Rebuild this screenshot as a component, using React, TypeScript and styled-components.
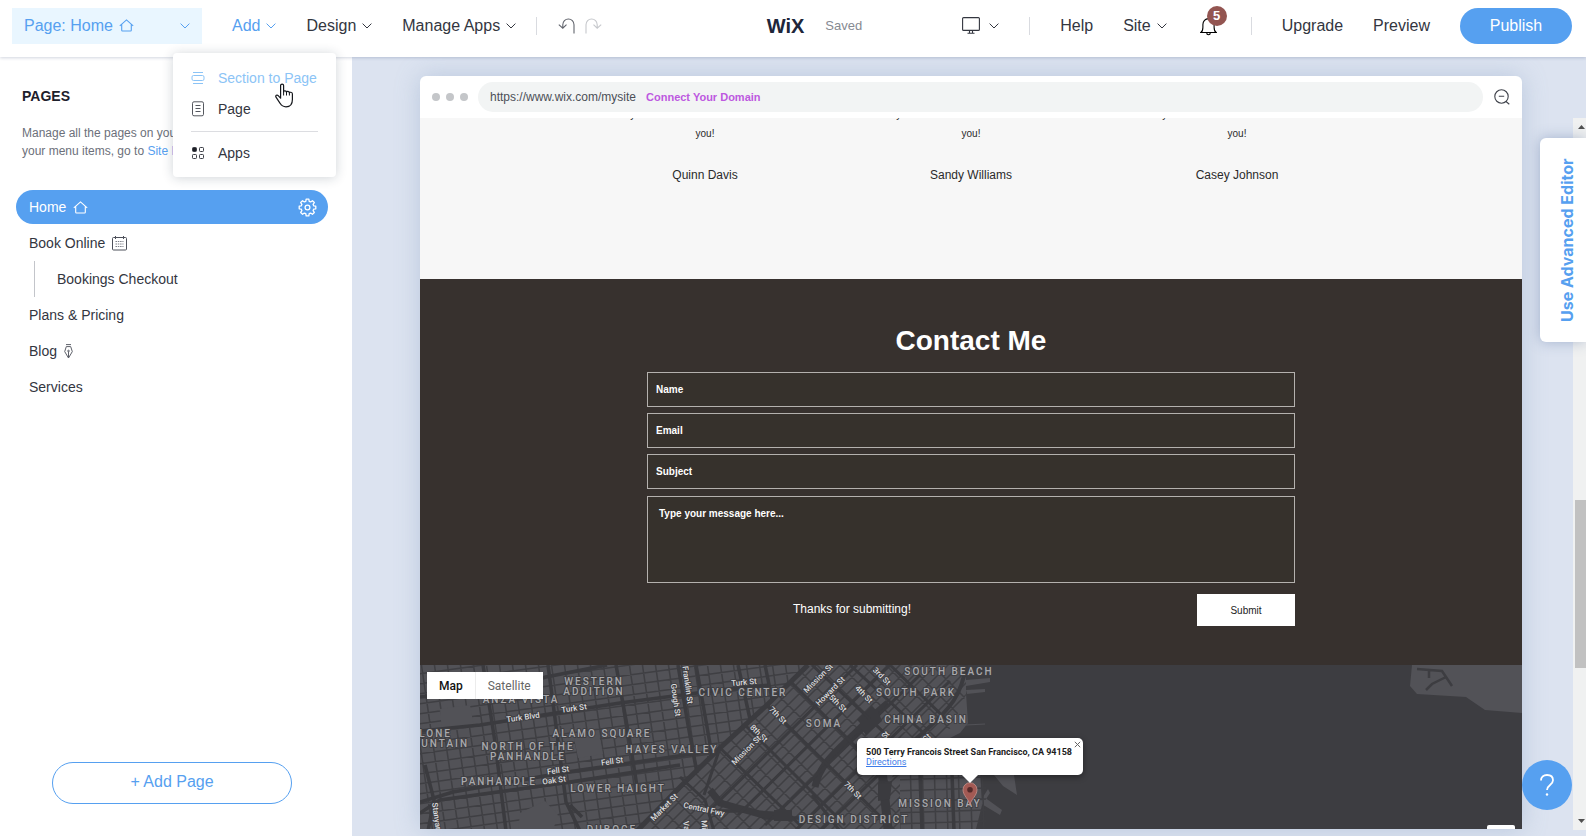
import React from 'react';
import styled, { createGlobalStyle, css } from 'styled-components';

const SANS = '"Liberation Sans", Arial, Helvetica, sans-serif';
const MAP_FONT = 'Roboto, Arial, sans-serif';
const BLUE = '#56a0f0';
const INK = '#33363f';

const GlobalStyle = createGlobalStyle`
  *, *::before, *::after { box-sizing: border-box; }
  html, body { margin: 0; }
  body { font-family: ${SANS}; color: ${INK}; background: #fff; }
  button, input, textarea { font-family: inherit; }
  button { cursor: pointer; }
  h1, h2, p, ul { margin: 0; padding: 0; }
  ul { list-style: none; }
`;

/* ---------- shell ---------- */

const Shell = styled.div`
  display: flex;
  flex-direction: column;
  min-height: 100vh;
`;

const TopBar = styled.header`
  position: relative;
  z-index: 5;
  display: flex;
  align-items: center;
  height: 57px;
  padding: 0 14px 6px 12px;
  background: #fff;
  box-shadow: 0 1px 3px rgba(50, 70, 110, 0.22);
`;

const Cluster = styled.div`
  display: flex;
  align-items: center;
`;

const MainMenu = styled(Cluster).attrs({ as: 'nav' })`
  gap: 30px;
  margin-left: 30px;
`;

const PlainButton = styled.button<{ $color?: string }>`
  display: inline-flex;
  align-items: center;
  gap: 6px;
  padding: 0;
  border: 0;
  background: none;
  color: ${(p) => p.$color || INK};
  font-size: 16px;
  line-height: 20px;
  white-space: nowrap;
`;

const PageSelect = styled(PlainButton)`
  width: 190px;
  height: 36px;
  padding: 0 12px;
  background: #e9f6ff;

  & > svg:last-child { margin-left: auto; }
`;

const Divider = styled.span`
  width: 1px;
  height: 18px;
  background: #d9dbe0;
`;

const History = styled(Cluster)`
  gap: 10px;
  margin-left: 20px;

  ${Divider} { margin-right: 11px; }
`;

const Brand = styled(Cluster)`
  gap: 21px;
  margin-left: auto;
`;

const Logo = styled.span`
  color: #20263a;
  font-size: 20px;
  font-weight: 700;
  line-height: 20px;
`;

const Saved = styled.span`
  color: #868a92;
  font-size: 13px;
  line-height: 20px;
`;

const Tools = styled(Cluster)`
  gap: 30px;
  margin-left: 100px;
`;

const DeviceButton = styled(PlainButton)`
  gap: 9px;
`;

const BellButton = styled.button`
  position: relative;
  width: 18px;
  height: 20px;
  margin: 0 3px;
  padding: 0;
  border: 0;
  background: none;
`;

const Badge = styled.span`
  position: absolute;
  left: 7px;
  top: -10px;
  width: 20px;
  height: 20px;
  border-radius: 50%;
  background: #935551;
  color: #fff;
  font-size: 13px;
  font-weight: 700;
  line-height: 20px;
  text-align: center;
`;

const Publish = styled.button`
  width: 112px;
  height: 36px;
  padding: 0;
  border: 0;
  border-radius: 18px;
  background: ${BLUE};
  color: #fff;
  font-size: 16px;
`;

/* ---------- Add menu ---------- */

const MenuAnchor = styled.div`
  position: relative;
  display: flex;
`;

const AddMenu = styled.div`
  position: absolute;
  left: -59px;
  top: 37px;
  width: 163px;
  padding: 10px 18px 8px;
  border-radius: 4px;
  background: #fff;
  box-shadow: 0 1px 12px rgba(20, 40, 60, 0.2);
`;

const MenuItem = styled.button<{ $active?: boolean }>`
  display: flex;
  align-items: center;
  gap: 13px;
  width: 100%;
  height: 31px;
  padding: 0;
  border: 0;
  background: none;
  color: ${(p) => (p.$active ? '#8cc4f6' : INK)};
  font-size: 14px;
  white-space: nowrap;
`;

const MenuRule = styled.hr`
  height: 1px;
  margin: 6px 0;
  border: 0;
  background: #dcdde1;
`;

const Pointer = styled.svg`
  position: absolute;
  left: 102px;
  top: 30px;
`;

/* ---------- pages panel ---------- */

const Body = styled.div`
  display: flex;
  flex: 1;
`;

const Panel = styled.aside`
  display: flex;
  flex-direction: column;
  flex: none;
  width: 352px;
  padding: 30px 24px 32px 16px;
  background: #fff;
`;

const PanelTitle = styled.h2`
  padding-left: 6px;
  font-size: 14px;
  line-height: 18px;
  color: #1d202b;
`;

const PanelText = styled.p`
  margin: 19px 0 30px;
  padding-left: 6px;
  color: #6c707a;
  font-size: 12px;
  line-height: 18px;

  a { color: ${BLUE}; text-decoration: none; }
`;

const PageList = styled.ul`
  display: flex;
  flex-direction: column;
  gap: 2px;
`;

const PageItem = styled.li<{ $active?: boolean; $child?: boolean }>`
  display: flex;
  align-items: center;
  justify-content: space-between;
  height: 34px;
  padding: 0 11px 0 13px;
  border-radius: 17px;
  ${(p) => p.$active && css`background: ${BLUE}; color: #fff;`}
  ${(p) => p.$child && css`
    height: 36px;
    margin: -1px 0 -1px 18px;
    padding-left: 22px;
    border-left: 1px solid #c3c5ca;
    border-radius: 0;
  `}
`;

const PageLink = styled.a`
  display: inline-flex;
  align-items: center;
  gap: 7px;
  color: inherit;
  font-size: 14px;
  text-decoration: none;
`;

const IconButton = styled.button`
  display: flex;
  padding: 0;
  border: 0;
  background: none;
  color: inherit;
`;

const AddPage = styled.button`
  align-self: center;
  width: 240px;
  height: 42px;
  margin-top: auto;
  padding: 0 0 2px;
  border: 1px solid ${BLUE};
  border-radius: 21px;
  background: #fff;
  color: ${BLUE};
  font-size: 16px;
`;

/* ---------- stage ---------- */

const Stage = styled.main`
  position: relative;
  display: flex;
  flex: 1;
  min-width: 0;
  background: #dce3f0;
`;

const Frame = styled.section`
  display: flex;
  flex-direction: column;
  flex: 1;
  min-width: 0;
  margin: 19px 51px 7px 68px;
  border-radius: 6px 6px 0 0;
  background: #fff;
  box-shadow: 0 0 24px rgba(120, 150, 185, 0.35);
`;

const AddressRow = styled.div`
  display: flex;
  align-items: center;
  height: 42px;
  padding: 0 12px;
`;

const Dots = styled.div`
  display: flex;
  gap: 6px;
  margin-right: 10px;

  i {
    width: 8px;
    height: 8px;
    border-radius: 50%;
    background: #c4c6c9;
  }
`;

const Address = styled.div`
  display: flex;
  align-items: center;
  flex: 1;
  gap: 10px;
  height: 30px;
  margin-right: 11px;
  padding: 0 12px;
  border-radius: 15px;
  background: #f2f4f4;
  color: #4c4f57;
  font-size: 12px;

  a {
    color: #bd59e0;
    font-size: 11px;
    font-weight: 700;
    text-decoration: none;
  }
`;

const Testimonials = styled.div`
  display: grid;
  grid-template-columns: repeat(3, 266px);
  justify-content: center;
  height: 161px;
  overflow: hidden;
  background: #f7f7f7;
  color: #2a2a2a;
  text-align: center;
`;

const Quote = styled.div`
  margin-top: -13px;
  font-size: 10px;
  line-height: 19px;
`;

const Author = styled.div`
  margin-top: 22px;
  font-size: 12px;
  line-height: 20px;
`;

const Contact = styled.div`
  display: flex;
  flex-direction: column;
  align-items: center;
  height: 386px;
  padding: 46px 24px 0;
  background: #37312e;
  color: #fff;
`;

const ContactTitle = styled.h1`
  margin-bottom: 15px;
  font-size: 28px;
  line-height: 32px;
`;

const Form = styled.form`
  display: flex;
  flex-direction: column;
  gap: 6px;
  width: 100%;
  max-width: 648px;
`;

const fieldLook = css`
  display: block;
  width: 100%;
  border: 1px solid #b4b1ae;
  border-radius: 0;
  outline: 0;
  background: #36312c;
  color: #fff;
  font-size: 10px;
  font-weight: 700;

  &::placeholder { color: #fff; opacity: 1; }
`;

const Field = styled.input`
  ${fieldLook}
  height: 35px;
  padding: 0 8px;
`;

const Message = styled.textarea`
  ${fieldLook}
  height: 87px;
  margin-top: 1px;
  padding: 10px 11px;
  line-height: 14px;
  resize: none;
`;

const FormFoot = styled.div`
  display: flex;
  align-items: center;
  justify-content: space-between;
  margin-top: 5px;
`;

const Thanks = styled.p`
  flex: 1;
  max-width: 410px;
  padding-bottom: 2px;
  font-size: 12px;
  text-align: center;
`;

const Submit = styled.button`
  width: 98px;
  height: 32px;
  padding: 0;
  border: 0;
  background: #fff;
  color: #222;
  font-size: 10px;
`;

/* ---------- map ---------- */

const MapArea = styled.div`
  position: relative;
  flex: 1;
  min-height: 164px;
  overflow: hidden;
  background: #3d3d41;
  font-family: ${MAP_FONT};
`;

const Streets = styled.svg`
  position: absolute;
  inset: 0;
  width: 100%;
  height: 100%;
`;

const MapLabels = styled.g`
  font-family: ${MAP_FONT};
  font-weight: 500;
  stroke: #3f3f43;
  stroke-width: 2px;
  stroke-linejoin: round;
  text-anchor: middle;
  paint-order: stroke;
`;

const AreaNames = styled.g`
  fill: #a9a9ac;
  font-size: 10px;
  letter-spacing: 2px;
`;

const RoadNames = styled.g`
  fill: #dcdcde;
  font-size: 8px;
`;

const MapToggle = styled.div`
  position: absolute;
  left: 7px;
  top: 7px;
  display: flex;
  background: #fff;
`;

const MapTab = styled.button<{ $on?: boolean }>`
  height: 27px;
  padding: 0 12px;
  border: 0;
  border-right: ${(p) => (p.$on ? '1px solid #ececec' : '0')};
  background: none;
  color: ${(p) => (p.$on ? '#111' : '#666')};
  font-family: ${MAP_FONT};
  font-size: 12px;
  font-weight: ${(p) => (p.$on ? 500 : 400)};
`;

const InfoBox = styled.div`
  position: absolute;
  left: 437px;
  top: 73px;
  width: 226px;
  height: 37px;
  padding: 9px 9px 0;
  border-radius: 5px;
  background: #fff;
  box-shadow: 0 2px 6px rgba(0, 0, 0, 0.4);
  color: #1c1c1c;
  font-size: 9px;
  font-weight: 700;
  line-height: 10px;
  white-space: nowrap;

  &::after {
    content: '';
    position: absolute;
    left: 105px;
    top: 37px;
    border: 8px solid transparent;
    border-top-color: #fff;
    border-bottom: 0;
  }

  a { color: #3d7be8; font-weight: 400; }
`;

const InfoClose = styled.button`
  position: absolute;
  right: 2px;
  top: 3px;
  display: flex;
  padding: 0;
  border: 0;
  background: none;
`;

const MapPin = styled.svg`
  position: absolute;
  left: 542px;
  top: 117px;
`;

const MapControl = styled.span`
  position: absolute;
  right: 7px;
  bottom: 0;
  width: 28px;
  height: 4px;
  border-radius: 2px 2px 0 0;
  background: #fff;
`;

/* ---------- right edge ---------- */

const ScrollTrack = styled.div`
  display: flex;
  flex-direction: column;
  align-items: center;
  flex: none;
  width: 13px;
  margin: 61px 0 6px;
  padding: 7px 0 7px 3px;
  background: #f0f1f1;
`;

const ScrollSpacer = styled.div<{ $grow: number }>`
  flex: ${(p) => p.$grow} 1 0;
`;

const ScrollThumb = styled.div`
  flex: 167 1 0;
  align-self: flex-end;
  width: 11px;
  background: #c1c1c1;
`;

const AdvancedTab = styled.button`
  position: absolute;
  right: 0;
  top: 81px;
  width: 46px;
  height: 204px;
  padding: 0 7px 0 0;
  border: 0;
  border-radius: 0 6px 6px 0;
  background: #fff;
  box-shadow: 0 0 14px rgba(60, 90, 140, 0.35);
  color: ${BLUE};
  font-family: Inter, ${SANS};
  font-size: 16px;
  font-weight: 700;
  writing-mode: vertical-rl;
  transform: rotate(180deg);
`;

const HelpButton = styled.button`
  position: absolute;
  right: 14px;
  bottom: 26px;
  display: flex;
  align-items: center;
  justify-content: center;
  width: 50px;
  height: 50px;
  padding: 0;
  border: 0;
  border-radius: 50%;
  background: ${BLUE};
`;

/* ---------- icons ---------- */

const Chevron = () => (
  <svg width="10" height="6" viewBox="0 0 10 6" fill="none" stroke="currentColor" aria-hidden="true">
    <path d="M.6.6 5 5 9.4.6" />
  </svg>
);

const HomeIcon = () => (
  <svg width="15" height="13" viewBox="0 0 15 13" fill="none" stroke="currentColor" strokeWidth="1.1" aria-hidden="true">
    <path d="M.8 6.8 7.5.9l6.7 5.9M2.7 5.4v5.8c0 .5.3.8.8.8h8c.5 0 .8-.3.8-.8V5.4" />
  </svg>
);

const UndoIcon = ({ flip }: { flip?: boolean }) => (
  <svg width="17" height="16" viewBox="0 0 17 16" fill="none" stroke={flip ? '#c6c8cc' : '#62656d'} strokeWidth="1.1" aria-hidden="true">
    <g transform={flip ? 'matrix(-1 0 0 1 17 0)' : undefined}>
      <path d="M16 15.500V6.800C16 3.400 13.500 1 10.400 1S4.800 3.400 4.800 6.800v3M.8 6.600l4 3.600 3.700-3.600" />
    </g>
  </svg>
);

const MonitorIcon = () => (
  <svg width="18" height="17" viewBox="0 0 18 17" fill="none" stroke="currentColor" strokeWidth="1.1" aria-hidden="true">
    <rect x=".6" y=".6" width="16.800" height="12.800" rx="1" />
    <path d="M7.500 13.500v2.400M10.500 13.500v2.400M5.500 16.200h7" />
  </svg>
);

const BellIcon = () => (
  <svg width="17" height="20" viewBox="0 0 17 20" fill="none" stroke="currentColor" strokeWidth="1.100" aria-hidden="true">
    <path d="M.8 16.500c1.700-1 2.100-2.700 2.100-5.300V8.500c0-3.300 2.300-5.900 5.600-5.900s5.600 2.600 5.600 5.900v2.700c0 2.600.4 4.300 2.100 5.300zM8.500 2.600V1M6.700 16.800c0 2.600 3.600 2.600 3.600 0" />
  </svg>
);

const SectionIcon = () => (
  <svg width="14" height="14" viewBox="0 0 14 14" fill="none" stroke="currentColor" aria-hidden="true">
    <path d="M2 1.500h10M2 12.500h10" />
    <rect x="1" y="4.500" width="12" height="5" rx="1.500" />
  </svg>
);

const PageIcon = () => (
  <svg width="14" height="16" viewBox="0 0 14 16" fill="none" stroke="#55585f" aria-hidden="true">
    <rect x="1.500" y=".8" width="11" height="14" rx="1.500" />
    <path d="M4.500 4.500h5M4.500 7.500h5M4.500 10.500h5" />
  </svg>
);

const AppsIcon = () => (
  <svg width="14" height="14" viewBox="0 0 14 14" fill="none" stroke="#3a3d45" aria-hidden="true">
    <rect x="1.500" y="1.500" width="4" height="4" rx="1" fill="#1d1f26" />
    <rect x="8.500" y="1.500" width="4" height="4" rx=".8" />
    <rect x="1.500" y="8.500" width="4" height="4" rx=".8" />
    <rect x="8.500" y="8.500" width="4" height="4" rx=".8" />
  </svg>
);

const GearIcon = () => {
  const pts: string[] = [];
  for (let i = 0; i < 8; i += 1) {
    const a = (i * Math.PI) / 4;
    [[-0.27, 6.4], [-0.16, 8.4], [0.16, 8.4], [0.27, 6.4]].forEach(([d, r]) => {
      pts.push(`${(9.5 + r * Math.sin(a + d)).toFixed(2)} ${(9.5 - r * Math.cos(a + d)).toFixed(2)}`);
    });
  }
  return (
    <svg width="19" height="19" viewBox="0 0 19 19" fill="none" stroke="currentColor" strokeWidth="1.300" strokeLinejoin="round" aria-hidden="true">
      <path d={`M${pts.join('L')}Z`} />
      <circle cx="9.500" cy="9.500" r="2.400" />
    </svg>
  );
};

const CalendarIcon = () => (
  <svg width="15" height="15" viewBox="0 0 15 15" fill="none" stroke="#4d505a" aria-hidden="true">
    <rect x=".5" y="1.500" width="14" height="12.500" rx="1" />
    <path d="M3.500 0v3M11.500 0v3" />
    <path d="M3.500 5.500h8M3.500 8h8M3.500 10.500h8" strokeDasharray="1.500 .8" stroke="#7b7e87" />
  </svg>
);

const PenIcon = () => (
  <svg width="9" height="15" viewBox="0 0 9 15" fill="none" stroke="#5d6069" aria-hidden="true">
    <path d="M2 .6h5M2.300 2.600h4.400l1.600 5L4.500 14 .7 7.600zM4.500 14V7.500" />
    <circle cx="4.500" cy="7" r=".8" />
  </svg>
);

const ZoomOutIcon = () => (
  <svg width="16" height="16" viewBox="0 0 16 16" fill="none" stroke="#3f424b" strokeWidth="1.100" aria-hidden="true">
    <circle cx="7.500" cy="7.500" r="6.700" />
    <path d="M4.800 7.300h5.400M12 12.500l3.300 2.700" />
  </svg>
);

const ScrollArrow = ({ down }: { down?: boolean }) => (
  <svg width="7" height="4" viewBox="0 0 7 4" aria-hidden="true">
    <path d={down ? 'M0 0h7L3.500 4z' : 'M0 4h7L3.500 0z'} fill="#505050" />
  </svg>
);

/* ---------- street map drawing ---------- */

type Line = [number, number, number, number];

const minorWest: Line[] = [];
for (let i = -3; i < 32; i += 1) minorWest.push([i * 13, -10, i * 13 + 27, 175]);
for (let i = -1; i < 26; i += 1) minorWest.push([-10, i * 10, 400, i * 10 - 56]);

const minorSoma: Line[] = [];
for (let i = -12; i < 44; i += 1) minorSoma.push([180 + i * 12, 180, 370 + i * 12, -10]);
for (let i = -6; i < 18; i += 1) minorSoma.push([180 + i * 23, -10, 370 + i * 23, 180]);

const minorBay: Line[] = [];
for (let i = 0; i < 10; i += 1) minorBay.push([478 + i * 12, 90, 480 + i * 12, 170]);
for (let i = 0; i < 7; i += 1) minorBay.push([470, 104 + i * 11, 570, 101 + i * 11]);

const toPath = (lines: Line[]) => lines.map(([a, b, c, d]) => `M${a} ${b}L${c} ${d}`).join('');

const areas: [string, number, number, ('start' | 'middle' | 'end')?][] = [
  ['WESTERN', 174, 20], ['ADDITION', 174, 30], ['ANZA VISTA', 101, 38],
  ['LONE', 32, 72, 'end'], ['MOUNTAIN', 49, 82, 'end'], ['ALAMO SQUARE', 182, 72],
  ['NORTH OF THE', 108, 85], ['PANHANDLE', 108, 95], ['HAYES VALLEY', 252, 88],
  ['PANHANDLE', 79, 120], ['LOWER HAIGHT', 198, 127], ['DUBOCE', 192, 168],
  ['CIVIC CENTER', 323, 31], ['SOUTH BEACH', 529, 10], ['SOUTH PARK', 496, 31],
  ['CHINA BASIN', 506, 58], ['SOMA', 404, 62], ['MISSION BAY', 520, 142],
  ['DESIGN DISTRICT', 434, 158],
];

const roads: [string, number, number, number][] = [
  ['Turk Blvd', 103, 52, -8], ['Turk St', 154, 43, -8], ['Fell St', 192, 96, -8],
  ['Fell St', 138, 105, -8], ['Oak St', 134, 115, -8], ['Franklin St', 268, 20, 82],
  ['Gough St', 256, 35, 82], ['Stanyan', 17, 152, 82], ['Market St', 244, 142, -45],
  ['Central Fwy', 284, 144, 12], ['Mission St', 286, 174, 85], ['Valencia St', 268, 176, 85],
  ['Turk St', 324, 17, -5], ['7th St', 358, 50, 45], ['8th St', 339, 68, 45],
  ['Mission St', 326, 85, -45], ['Mission St', 398, 13, -45], ['Howard St', 410, 26, -45],
  ['5th St', 418, 38, 45], ['3rd St', 462, 11, 45], ['4th St', 444, 29, 45],
  ['7th St', 433, 125, 45], ['Brannan St', 454, 81, -45], ['Townsend St', 493, 86, -45],
];

const StreetMap = () => (
  <Streets role="img" aria-label="Street map of San Francisco">
    <defs>
      <clipPath id="west"><path d="M0 0H392L347 40 300 83 217 166H0Z" /></clipPath>
      <clipPath id="soma"><path d="M392 0H546V30L532 62 480 100V166H217L300 83 347 40Z" /></clipPath>
      <clipPath id="bay"><path d="M480 100H566V166H480Z" /></clipPath>
    </defs>
    <path fill="#525257" d="M0 0H540L546 12V28L548 58 540 68 480 98 472 112 500 105H560L562 140 556 164H0Z" />
    <path fill="#525257" d="M546 15 570 13v4l-24 4zM546 25l19-1v3l-18 2zM574 110h20l3 20-14-9zM560 138l4-6 18 13-2 5zM563 132l5-8 2 4-6 9z" />
    <path fill="none" stroke="#525257" d="M546 60 565 59" />
    <path fill="#525257" d="M992 0H3000V200L1102 48 1065 45 1046 32 997 29 990 21Z" />
    <path fill="none" stroke="#3d3d41" strokeWidth="2.500" d="M997 4 1022 6 1032 21M1009 5v8M1026 12 1012 19 1006 25" />

    <g fill="none" stroke="#3f3f43">
      <path clipPath="url(#west)" strokeWidth="1.500" d={toPath(minorWest)} />
      <path clipPath="url(#soma)" strokeWidth="1.500" d={toPath(minorSoma)} />
      <path clipPath="url(#bay)" strokeWidth="1.500" d={toPath(minorBay)} />
    </g>
    <path fill="#525257" d="M100 148 125 136 138 150 132 168H98ZM154 73 179 69 183 89 158 93ZM20 44 50 40 54 62 22 66Z" />
    <g fill="none" stroke="#3b3b3f">
      <g strokeWidth="3.500">
        <path d="M0 66 60 60 110 52 200 38 300 25 350 20" />
        <path d="M0 32 90 22 126 12 187 0" />
        <path d="M0 137 33 127 147 107 300 85" />
        <path d="M0 148 20 135 150 117 260 100" />
        <path d="M63 0 75 77 86 166M128 0 146 137 160 166M196 0 210 77 218 128M258 0 268 60 277 108M5 100 14 135 8 166M150 140 162 152" />
        <path d="M276 0 292 90M318 0 330 54M345 0 352 34" />
        <path d="M284 146H330L345 153H400" />
        <path d="M500 108 502 166M532 108 534 166" />
      </g>
      <path strokeWidth="5" d="M215 168 262 120 300 83 347 40 388 0" />
      <path strokeWidth="7" d="M290 125 300 138 340 149 370 151M395 122C400 95 425 80 448 55L468 38" />
      <path strokeWidth="9" d="M440 58 455 44M462 105 468 164" />
      <g strokeWidth="3">
        <path d="M290 145 437 0M318 150 470 0M345 160 500 10M375 166 530 16M400 166 500 70" />
        <path d="M300 83 380 160M325 60 425 160M347 40 475 166M372 18 460 106M392 0 490 92M430 0 510 74M470 0 530 58" />
        <path d="M392 130 420 166M260 112 285 135 294 166M300 83 284 130" />
      </g>
      <path strokeWidth="4" d="M546 0C542 30 530 44 505 66L470 96" />
    </g>
    <path fill="#3b3b3f" d="M440 62 458 46 462 56 446 70ZM458 118 472 116 470 134 458 136ZM354 145H372V156H354Z" />

    <MapLabels>
      <AreaNames>
        {areas.map(([t, x, y, anchor]) => (
          <text key={`${t}${y}`} x={x} y={y} textAnchor={anchor}>{t}</text>
        ))}
      </AreaNames>
      <RoadNames>
        {roads.map(([t, x, y, r]) => (
          <text key={`${t}${x}`} transform={`translate(${x} ${y}) rotate(${r})`} y="3">{t}</text>
        ))}
      </RoadNames>
    </MapLabels>
  </Streets>
);

/* ---------- data ---------- */

const authors = ['Quinn Davis', 'Sandy Williams', 'Casey Johnson'];

const pages: { name: string; icon?: React.ReactNode; active?: boolean; child?: boolean }[] = [
  { name: 'Home', icon: <HomeIcon />, active: true },
  { name: 'Book Online', icon: <CalendarIcon /> },
  { name: 'Bookings Checkout', child: true },
  { name: 'Plans & Pricing' },
  { name: 'Blog', icon: <PenIcon /> },
  { name: 'Services' },
];

export default function App() {
  return (
    <Shell>
      <GlobalStyle />
      <TopBar>
        <PageSelect $color={BLUE}>Page: Home <HomeIcon /><Chevron /></PageSelect>
        <MainMenu>
          <MenuAnchor>
            <PlainButton $color={BLUE} aria-expanded="true">Add <Chevron /></PlainButton>
            <AddMenu>
              <MenuItem $active><SectionIcon />Section to Page</MenuItem>
              <MenuItem><PageIcon />Page</MenuItem>
              <MenuRule />
              <MenuItem><AppsIcon />Apps</MenuItem>
              <Pointer width="19" height="25" viewBox="0 0 19 25" aria-hidden="true">
                <path
                  fill="#fff"
                  stroke="#15171c"
                  strokeWidth="1.200"
                  strokeLinejoin="round"
                  d="M5.600 15.200V2.600C5.600.5 8.600.5 8.600 2.600V9c0-1.600 2.900-1.600 2.900.4 0-1.500 2.900-1.400 2.900.7 0-1.300 3-1.200 3 .9v5.500c0 4.600-2.600 7.300-6.400 7.300-3 0-4.600-1.300-5.900-3.500L1 14.200c-.9-1.600 1-2.800 2.200-1.500z"
                />
                <path stroke="#15171c" d="M8.600 9v3.500M11.500 9.400v3.100M14.400 10.100v2.400" />
              </Pointer>
            </AddMenu>
          </MenuAnchor>
          <PlainButton>Design <Chevron /></PlainButton>
          <PlainButton>Manage Apps <Chevron /></PlainButton>
        </MainMenu>
        <History>
          <Divider />
          <IconButton aria-label="Undo"><UndoIcon /></IconButton>
          <IconButton aria-label="Redo"><UndoIcon flip /></IconButton>
        </History>
        <Brand>
          <Logo>WiX</Logo>
          <Saved>Saved</Saved>
        </Brand>
        <Tools>
          <DeviceButton aria-label="Switch device"><MonitorIcon /><Chevron /></DeviceButton>
          <Divider />
          <PlainButton>Help</PlainButton>
          <PlainButton>Site <Chevron /></PlainButton>
          <BellButton aria-label="Notifications"><BellIcon /><Badge>5</Badge></BellButton>
          <Divider />
          <PlainButton>Upgrade</PlainButton>
          <PlainButton>Preview</PlainButton>
          <Publish>Publish</Publish>
        </Tools>
      </TopBar>

      <Body>
        <Panel>
          <PanelTitle>PAGES</PanelTitle>
          <PanelText>
            Manage all the pages on your site.
            <br />
            your menu items, go to <a href="#menu">Site Menu</a>
          </PanelText>
          <PageList>
            {pages.map((p) => (
              <PageItem key={p.name} $active={p.active} $child={p.child}>
                <PageLink href="#page">{p.name}{p.icon}</PageLink>
                {p.active && <IconButton aria-label="Page settings"><GearIcon /></IconButton>}
              </PageItem>
            ))}
          </PageList>
          <AddPage>+ Add Page</AddPage>
        </Panel>

        <Stage>
          <Frame>
            <AddressRow>
              <Dots><i /><i /><i /></Dots>
              <Address>
                <span>https://www.wix.com/mysite</span>
                <a href="#domain">Connect Your Domain</a>
              </Address>
              <IconButton aria-label="Zoom out"><ZoomOutIcon /></IconButton>
            </AddressRow>

            <Testimonials>
              {authors.map((name) => (
                <div key={name}>
                  <Quote>your customers and let them tell it<br />you!</Quote>
                  <Author>{name}</Author>
                </div>
              ))}
            </Testimonials>

            <Contact>
              <ContactTitle>Contact Me</ContactTitle>
              <Form onSubmit={(e) => e.preventDefault()}>
                <Field aria-label="Name" placeholder="Name" />
                <Field aria-label="Email" type="email" placeholder="Email" />
                <Field aria-label="Subject" placeholder="Subject" />
                <Message aria-label="Message" placeholder="Type your message here..." />
                <FormFoot>
                  <Thanks>Thanks for submitting!</Thanks>
                  <Submit type="submit">Submit</Submit>
                </FormFoot>
              </Form>
            </Contact>

            <MapArea>
              <StreetMap />
              <MapToggle>
                <MapTab $on>Map</MapTab>
                <MapTab>Satellite</MapTab>
              </MapToggle>
              <MapPin width="16" height="24" viewBox="0 0 16 24" aria-hidden="true">
                <path fill="#a35a54" stroke="#c58f89" strokeWidth=".8" d="M8 23.300C7.200 17 1 14 1 7.700a7 7 0 0 1 14 0C15 14 8.800 17 8 23.300z" />
                <circle cx="8" cy="7.800" r="2.800" fill="#552a2a" />
              </MapPin>
              <InfoBox>
                500 Terry Francois Street San Francisco, CA 94158
                <br />
                <a href="#directions">Directions</a>
                <InfoClose aria-label="Close">
                  <svg width="7" height="7" viewBox="0 0 7 7" stroke="#666" aria-hidden="true">
                    <path d="M.8.8l5.400 5.400M6.200.8.8 6.200" />
                  </svg>
                </InfoClose>
              </InfoBox>
              <MapControl />
            </MapArea>
          </Frame>

          <ScrollTrack aria-hidden="true">
            <ScrollArrow />
            <ScrollSpacer $grow={369} />
            <ScrollThumb />
            <ScrollSpacer $grow={150} />
            <ScrollArrow down />
          </ScrollTrack>
          <AdvancedTab>Use Advanced Editor</AdvancedTab>
          <HelpButton aria-label="Help">
            <svg width="16" height="24" viewBox="0 0 16 24" fill="none" stroke="#fff" strokeWidth="1.800" aria-hidden="true">
              <path d="M2 7.500C2 4 4.500 2 8 2s6 2 6 5.300c0 4.700-6 4.700-6 9.700" />
              <circle cx="8" cy="21.500" r="1.200" fill="#fff" stroke="none" />
            </svg>
          </HelpButton>
        </Stage>
      </Body>
    </Shell>
  );
}
